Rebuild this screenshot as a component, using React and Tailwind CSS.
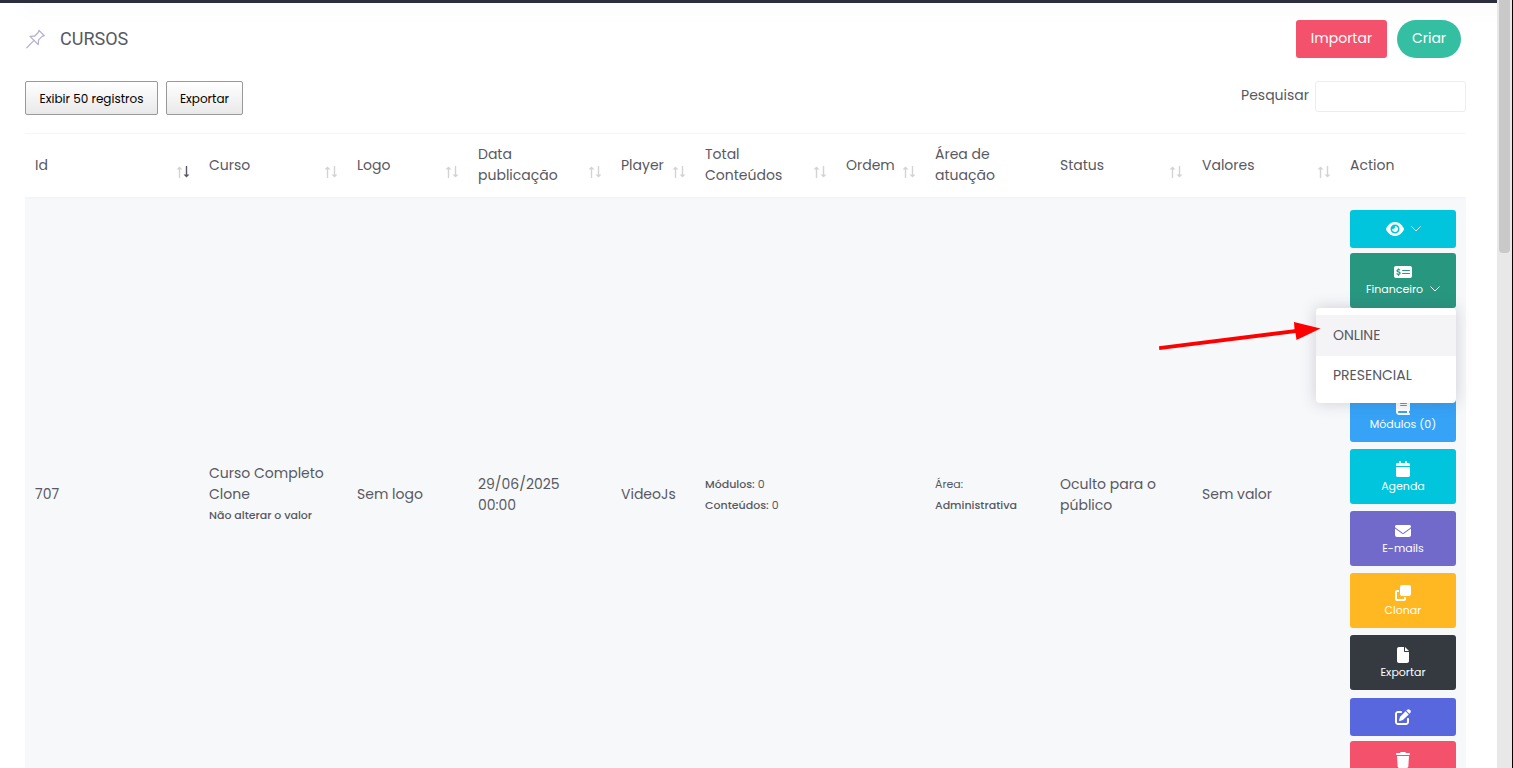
import React, { useState } from 'react';
import {
  FaBook,
  FaCalendar,
  FaClone,
  FaEnvelope,
  FaEye,
  FaFile,
  FaMoneyCheckDollar,
  FaPenToSquare,
  FaTrash,
} from 'react-icons/fa6';

const columns = [
  { label: 'Id', width: 'w-[174px]', sort: 'desc' },
  { label: 'Curso', width: 'w-[148px]', sort: 'none' },
  { label: 'Logo', width: 'w-[121px]', sort: 'none' },
  { label: 'Data publicação', width: 'w-[143px]', sort: 'none' },
  { label: 'Player', width: 'w-[84px]', sort: 'none' },
  { label: 'Total Conteúdos', width: 'w-[141px]', sort: 'none' },
  { label: 'Ordem', width: 'w-[89px]', sort: 'none' },
  { label: 'Área de atuação', width: 'w-[125px]' },
  { label: 'Status', width: 'w-[142px]', sort: 'none' },
  { label: 'Valores', width: 'w-[148px]', sort: 'none' },
  { label: 'Action', width: 'w-[126px]' },
];

const PinIcon = () => (
  <svg
    viewBox="0 0 20 20"
    className="w-5 h-5 text-[#b5b3cd]"
    fill="none"
    stroke="currentColor"
    strokeWidth="1.3"
    strokeLinejoin="round"
    strokeLinecap="round"
  >
    <path d="M14 1.400 19.300 6.700 17.100 7.400 13.600 10.900 13.200 15.600 5 7.400 9.700 7 13.200 3.500Z" />
    <path d="M9 11.400 1.800 18.700" />
  </svg>
);

const ChevronDown = () => (
  <svg
    viewBox="0 0 10 6"
    className="w-[10px] h-[6px]"
    fill="none"
    stroke="currentColor"
    strokeWidth="1"
  >
    <path d="M0.5 0.5 5 5 9.5 0.5" />
  </svg>
);

const SortIcon = ({ sort }) => (
  <svg
    viewBox="0 0 14 12"
    className="absolute right-[9px] bottom-[19px] w-[14px] h-3"
    strokeWidth="1.4"
  >
    <g stroke="#d3d3d6" fill="#d3d3d6">
      <path d="M3.500 12V2" />
      <path d="M0.500 3.600 3.500 0.500 6.500 3.600Z" stroke="none" />
    </g>
    <g
      stroke={sort === 'desc' ? '#575962' : '#d3d3d6'}
      fill={sort === 'desc' ? '#575962' : '#d3d3d6'}
    >
      <path d="M10.500 0V10" />
      <path d="M7.500 8.400 10.500 11.500 13.500 8.400Z" stroke="none" />
    </g>
  </svg>
);

const ActionButton = ({ icon: Icon, label, className }) => (
  <button
    type="button"
    className={`flex flex-col items-center justify-center w-full h-[55px] pt-[3px] rounded-[3px] text-white text-[11px] leading-[18px] ${className}`}
  >
    <Icon className="w-4 h-4" />
    <span>{label}</span>
  </button>
);

const App = () => {
  const [search, setSearch] = useState('');

  return (
    <div className="flex h-screen overflow-hidden bg-white font-['Poppins',Inter,sans-serif] text-sm leading-[21px] text-[#575962]">
      <main className="flex-1 min-w-0">
        <div className="h-[3px] bg-[#2c2e3e] shadow-[20px_2px_24px_rgba(69,65,78,0.12)]" />

        <div className="px-[25px] pt-[17px] pr-[31px]">
          {/* Title */}
          <header className="flex items-center justify-between h-[38px] pr-[5px]">
            <div className="flex items-center gap-[15px]">
              <PinIcon />
              <h1 className="font-[Roboto] text-lg">CURSOS</h1>
            </div>
            <div className="flex gap-[10px] text-white">
              <button type="button" className="w-[91px] h-[38px] pb-[2px] rounded-[3px] bg-[#f4516c]">
                Importar
              </button>
              <button type="button" className="w-16 h-[38px] pb-[2px] rounded-full bg-[#34bfa3]">
                Criar
              </button>
            </div>
          </header>

          {/* Toolbar */}
          <div className="flex items-start justify-between pt-[23px] pb-[18px]">
            <div className="flex gap-2 text-xs text-black">
              <button
                type="button"
                className="w-[133px] h-[34px] pt-[2px] rounded-[2px] border border-[#999] bg-linear-to-b from-white to-[#e9e9e9]"
              >
                Exibir 50 registros
              </button>
              <button
                type="button"
                className="w-[77px] h-[34px] pt-[2px] rounded-[2px] border border-[#999] bg-linear-to-b from-white to-[#e9e9e9]"
              >
                Exportar
              </button>
            </div>
            <label className="flex items-center gap-[6px]">
              <span className="pb-[2px]">Pesquisar</span>
              <input
                type="search"
                value={search}
                onChange={(e) => setSearch(e.target.value)}
                className="w-[151px] h-[31px] px-2 rounded-[3px] border border-[#ebedf2] outline-none"
              />
            </label>
          </div>

          {/* Courses */}
          <table className="w-full table-fixed border-collapse text-left">
            <thead>
              <tr className="h-16 border-t border-b-2 border-[#f4f5f8]">
                {columns.map((col) => (
                  <th key={col.label} className={`relative px-[10px] font-normal ${col.width}`}>
                    <div className={col.sort ? 'pr-4' : 'pr-8'}>{col.label}</div>
                    {col.sort && <SortIcon sort={col.sort} />}
                  </th>
                ))}
              </tr>
            </thead>
            <tbody>
              <tr className="bg-[#f7f8fa]">
                <td className="px-[10px]">707</td>
                <td className="px-[10px]">
                  Curso Completo Clone
                  <p className="text-[11px] font-medium">Não alterar o valor</p>
                </td>
                <td className="px-[10px]">Sem logo</td>
                <td className="px-[10px]">
                  29/06/2025
                  <br />
                  00:00
                </td>
                <td className="px-[10px]">VideoJs</td>
                <td className="px-[10px] text-[11px]">
                  <p>
                    <b className="font-medium">Módulos:</b> 0
                  </p>
                  <p>
                    <b className="font-medium">Conteúdos:</b> 0
                  </p>
                </td>
                <td className="px-[10px]" />
                <td className="px-[10px] text-[11px]">
                  <p>Área:</p>
                  <p className="font-medium">Administrativa</p>
                </td>
                <td className="px-[10px]">Oculto para o público</td>
                <td className="px-[10px]">Sem valor</td>
                <td className="px-[10px] pt-[11px] pb-3">
                  <button
                    type="button"
                    aria-label="Visualizar"
                    className="flex items-center justify-center gap-[7px] w-full h-[38px] mb-[5px] rounded-[3px] bg-[#00c5dc] text-white"
                  >
                    <FaEye className="w-[18px] h-4" />
                    <ChevronDown />
                  </button>

                  <div className="relative mb-[79px]">
                    <button
                      type="button"
                      aria-expanded="true"
                      className="flex flex-col items-center justify-center w-full h-[55px] pt-[2px] rounded-[3px] bg-[#289780] text-white text-[11px] leading-[18px]"
                    >
                      <FaMoneyCheckDollar className="w-[18px] h-4" />
                      <span className="flex items-center gap-[7px]">
                        Financeiro
                        <ChevronDown />
                      </span>
                    </button>
                    <ul className="absolute right-0 top-full z-10 w-[140px] pt-[7px] pb-2 rounded bg-white shadow-[0_0_15px_1px_rgba(69,65,78,0.2)]">
                      <li>
                        <a href="#online" className="block px-[17px] py-[10px] bg-[#f4f4f6]">
                          ONLINE
                        </a>
                      </li>
                      <li>
                        <a href="#presencial" className="block px-[17px] py-[9px]">
                          PRESENCIAL
                        </a>
                      </li>
                    </ul>
                    {/* Arrow pointing at the first option */}
                    <svg
                      viewBox="0 0 164 32"
                      className="absolute right-[134px] top-full mt-3 z-20 w-[164px] h-8 max-w-none"
                      fill="#f00"
                    >
                      <path d="M1 26.200 136.500 9.200 136 2 162.500 8.500 138.500 20 137.500 13 1.300 30Z" />
                    </svg>
                  </div>

                  <div className="flex flex-col gap-[7px] mb-2">
                    <ActionButton icon={FaBook} label="Módulos (0)" className="bg-[#36a3f7]" />
                    <ActionButton icon={FaCalendar} label="Agenda" className="bg-[#00c5dc]" />
                    <ActionButton icon={FaEnvelope} label="E-mails" className="bg-[#716aca]" />
                    <ActionButton icon={FaClone} label="Clonar" className="bg-[#ffb822]" />
                    <ActionButton icon={FaFile} label="Exportar" className="bg-[#343a40]" />
                  </div>

                  <button
                    type="button"
                    aria-label="Editar"
                    className="flex items-center justify-center w-full h-[38px] mb-[5px] rounded-[3px] bg-[#5867dd] text-white"
                  >
                    <FaPenToSquare className="w-4 h-4" />
                  </button>
                  <button
                    type="button"
                    aria-label="Excluir"
                    className="flex items-center justify-center w-full h-[38px] rounded-[3px] bg-[#f4516c] text-white"
                  >
                    <FaTrash className="w-4 h-4" />
                  </button>
                </td>
              </tr>
            </tbody>
          </table>
        </div>
      </main>

      {/* Scroll track */}
      <div className="w-4 shrink-0 border-r border-black bg-[#e8e8e8] px-[2px]">
        <div className="h-[253px] rounded-b bg-[#c9c9c9]" />
      </div>
    </div>
  );
};

export default App;
